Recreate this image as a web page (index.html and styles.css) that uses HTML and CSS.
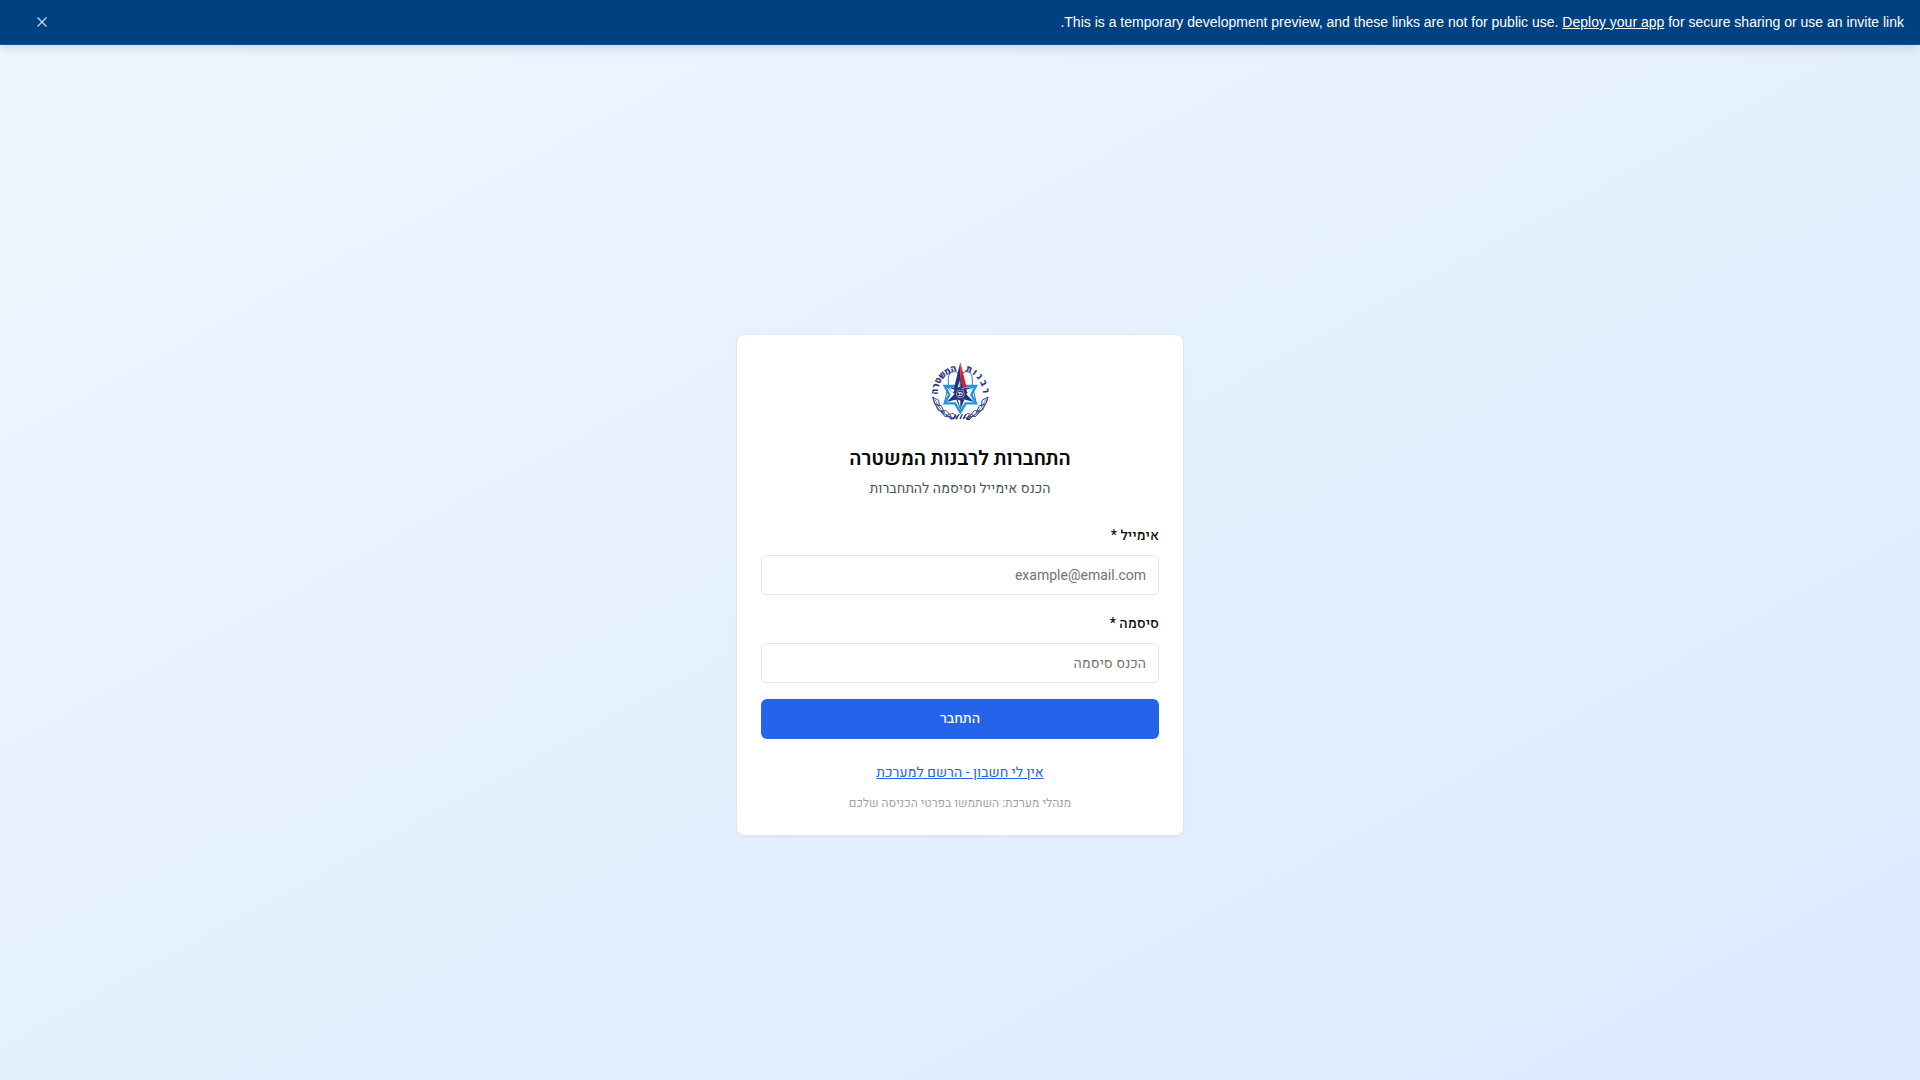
FILE: index.html
```html
<!DOCTYPE html>
<html lang="he" dir="rtl">
<head>
  <meta charset="utf-8">
  <meta name="viewport" content="width=device-width, initial-scale=1">
  <title>התחברות לרבנות המשטרה</title>
  <link rel="stylesheet" href="styles.css">
</head>
<body>
  <div class="banner">
    <p class="banner-text">This is a temporary development preview, and these links are not for public use. <a href="#">Deploy your app</a> for secure sharing or use an invite link.</p>
    <button class="banner-close" type="button" aria-label="Close">
      <svg width="10" height="10" viewBox="0 0 10 10" fill="none" stroke="currentColor" stroke-width="1.4"><path d="M.5.5l9 9M9.500.5l-9 9"/></svg>
    </button>
  </div>
  <main class="page">
    <section class="card">
      <header class="card-header">
        <svg class="logo" viewBox="24 28 192 192" role="img" aria-label="רבנות המשטרה">
          <g class="logo-letters">
            <text transform="translate(121 131) rotate(84) translate(0 -68)">ר</text>
            <text transform="translate(121 131) rotate(66) translate(0 -68)">ב</text>
            <text transform="translate(121 131) rotate(49) translate(0 -68)">נ</text>
            <text transform="translate(121 131) rotate(35) translate(0 -68)">ו</text>
            <text transform="translate(121 131) rotate(20) translate(0 -68)">ת</text>
            <text transform="translate(121 131) rotate(-16) translate(0 -68)">ה</text>
            <text transform="translate(121 131) rotate(-30) translate(0 -68)">מ</text>
            <text transform="translate(121 131) rotate(-45) translate(0 -68)">ש</text>
            <text transform="translate(121 131) rotate(-60) translate(0 -68)">ט</text>
            <text transform="translate(121 131) rotate(-73) translate(0 -68)">ר</text>
            <text transform="translate(121 131) rotate(-86) translate(0 -68)">ה</text>
          </g>
          <path d="M74 156l11-50V86q1-20 18-20 14 0 18 18 4-18 18-18 17 0 18 20v20l11 50" fill="none" stroke="#5967a5" stroke-width="3"/>
          <path d="M121 86l14 23h33l-14 26 14 26h-31l-16 27-16-27H74l14-26-14-26h33z" fill="#fff" stroke="#0f9bdf" stroke-width="7"/>
          <path d="M80 113l32 2-8 18zM162 113l-32 2 8 18zM80 157l24-24 8 16zM162 157l-24-24-8 16zM121 180l-13-32h26z" fill="#25307e"/>
          <path d="M121 176v-24l-8-3zM84 114l15 15 5-9zM158 114l-15 15-5-9z" fill="#fff"/>
          <path d="M121 38l-19 77 19 8z" fill="#25307e"/>
          <path d="M121 38l19 75-12 2-7-31z" fill="#d71f2b"/>
          <path d="M121 84l8 31-8 6z" fill="#25307e"/>
          <path d="M119 92l-6 22 6-3z" fill="#fff"/>
          <path d="M121 114l18 9v20l-18 10-18-10v-20z" fill="#25307e"/>
          <circle cx="121" cy="133" r="12" fill="none" stroke="#c6cfe9" stroke-width="2"/>
          <path d="M115 129h10q5 8-4 9h-6M119 129v5" fill="none" stroke="#fff" stroke-width="3"/>
          <g fill="none" stroke="#3c4b91" stroke-width="3">
            <path d="M38 142q9 47 62 64M204 142q-9 47-62 64"/>
            <path d="M38 142l18 10 2 18-15-11zM47 165l17 3 9 20-19-7zM61 184l18-1 15 18-20-1zM81 197l18-6 12 12-19 5z"/>
            <path d="M204 142l-18 10-2 18 15-11zM195 165l-17 3-9 20 19-7zM181 184l-18-1-15 18 20-1zM161 197l-18-6-12 12 19 5z"/>
            <path d="M43 147l13 23 15 18 20 16M199 147l-13 23-15 18-20 16" stroke-width="2"/>
          </g>
          <path d="M99 208l9-13M108 209l9-16M120 209l7-15M130 209l7-15M140 208l8-12M91 207h11M139 209h11" stroke="#25307e" stroke-width="4"/>
        </svg>
        <h1 class="title">התחברות לרבנות המשטרה</h1>
        <p class="subtitle">הכנס אימייל וסיסמה להתחברות</p>
      </header>
      <form class="form">
        <div class="field">
          <label for="email">אימייל *</label>
          <input id="email" type="email" placeholder="example@email.com">
        </div>
        <div class="field">
          <label for="password">סיסמה *</label>
          <input id="password" type="password" placeholder="הכנס סיסמה">
        </div>
        <button class="submit" type="submit">התחבר</button>
      </form>
      <footer class="card-footer">
        <a class="register" href="#">אין לי חשבון - הרשם למערכת</a>
        <p class="note">מנהלי מערכת: השתמשו בפרטי הכניסה שלכם</p>
      </footer>
    </section>
  </main>
</body>
</html>
```
FILE: styles.css
```css
* {
  box-sizing: border-box;
}

body {
  margin: 0;
  min-height: 100vh;
  display: flex;
  flex-direction: column;
  font-family: Heebo, Roboto, "Noto Sans Hebrew", "Open Sans", sans-serif;
  font-size: 14px;
  line-height: 20px;
  color: #0c0a09;
}

h1,
p {
  margin: 0;
}

.banner {
  position: relative;
  display: flex;
  align-items: center;
  justify-content: space-between;
  min-height: 45px;
  padding: 0 16px;
  background: #004182;
  border-bottom: 1px solid #0f549b;
  box-shadow: 0 2px 12px rgba(0, 0, 0, 0.15);
  color: #fff;
  font-family: "Liberation Sans", Arial, sans-serif;
}

.banner-text a {
  color: inherit;
}

.banner-close {
  display: flex;
  align-items: center;
  justify-content: center;
  width: 52px;
  height: 32px;
  padding: 0;
  border: 0;
  background: none;
  color: #c3d2e3;
}

.page {
  flex: 1;
  display: flex;
  align-items: center;
  justify-content: center;
  padding: 61px 16px 16px;
  background: linear-gradient(to bottom right, #eff6ff, #dbeafe);
}

.card {
  width: 100%;
  max-width: 448px;
  padding: 24px;
  background: #fff;
  border: 1px solid #e5e5e5;
  border-radius: 8px;
  box-shadow: 0 1px 2px rgba(0, 0, 0, 0.05);
}

.card-header {
  display: flex;
  flex-direction: column;
  align-items: center;
  text-align: center;
}

.logo {
  width: 64px;
  height: 64px;
  margin-bottom: 16px;
}

.logo-letters {
  fill: #25307e;
  stroke: #25307e;
  stroke-width: 1px;
  font-family: "Open Sans", "DejaVu Sans", sans-serif;
  font-size: 25px;
  font-weight: 700;
  text-anchor: middle;
}

.title {
  font-size: 20px;
  line-height: 40px;
  font-weight: 600;
}

.subtitle {
  color: #4b5563;
}

.form {
  display: flex;
  flex-direction: column;
  gap: 16px;
  margin-top: 24px;
}

.field {
  display: flex;
  flex-direction: column;
  gap: 6px;
}

.field label {
  line-height: 26px;
  font-weight: 500;
}

.field input {
  width: 100%;
  height: 40px;
  padding: 8px 12px;
  border: 1px solid #e5e5e5;
  border-radius: 6px;
  background: #fff;
  color: inherit;
  font: inherit;
  text-align: right;
  direction: rtl;
}

.field input::placeholder {
  color: #78716c;
}

.submit {
  height: 40px;
  border: 0;
  border-radius: 6px;
  background: #2563eb;
  color: #fafaf9;
  font: inherit;
  font-weight: 500;
}

.card-footer {
  display: flex;
  flex-direction: column;
  align-items: center;
  gap: 12px;
  margin-top: 24px;
}

.register {
  color: #2563eb;
}

.note {
  color: #9ca3af;
  font-size: 12px;
  line-height: 16px;
}
```
